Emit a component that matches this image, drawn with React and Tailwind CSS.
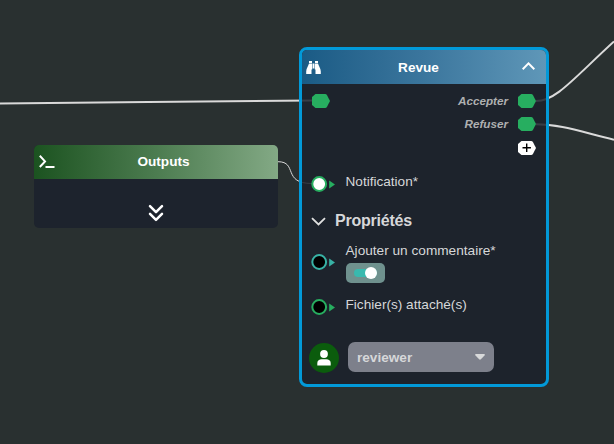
const Port = ({ plus }) => (
  <svg className="block h-[14px] w-[18px]" viewBox="0 0 18 14">
    <path d="M3.5 0H13.2Q14.3 0 14.9 1L18 7L14.9 13Q14.3 14 13.2 14H3.5L0 11V3Z" fill={plus ? '#ffffff' : '#27ae60'} />
    {plus && <path d="M8.7 2.6v8.4M4.5 6.8h8.4" stroke="#000" strokeWidth="1.4" />}
  </svg>
);

const Input = ({ color, fill }) => (
  <svg className="block h-4 w-6 shrink-0" viewBox="0 0 24 16">
    <circle cx="8.2" cy="8" r="6.9" fill={fill} stroke={color} strokeWidth="2" />
    <path d="M18.2 4.6L24 8.4L18.2 12.4Z" fill={color} />
  </svg>
);

const Wires = () => (
  <svg className="absolute inset-0" width="614" height="444" fill="none" stroke="#dadada">
    <path d="M0 103.6C110 102.8 200 100.8 312 100.6" strokeWidth="2" />
    <path d="M536 101C556 101 573 79 614 41.5" strokeWidth="2" />
    <path d="M536 124.3C560 124.3 580 131.5 614 139.7" strokeWidth="2" />
    <path d="M278 161.7C298 161.7 282 183.5 312 183.5" strokeWidth="1" />
  </svg>
);

const Output = ({ label }) => (
  <div className="flex items-start gap-[10px]">
    <span className="text-[11.7px] leading-[13px] font-bold italic text-[#aeb0b1]">{label}</span>
    <Port />
  </div>
);

const OutputsNode = () => (
  <section className="absolute left-[34px] top-[145px] h-[83px] w-[244px] overflow-hidden rounded-[5px] bg-[#1d232d]">
    <header className="flex h-[34px] items-center bg-linear-to-r from-[#1b5320] via-[#4c7c50] to-[#83a985] pl-[5px] pr-[7px]">
      <svg className="h-[14px] w-[17px]" viewBox="0 0 17 14" fill="none" stroke="#fff">
        <path d="M.8 .8L6 6.4L.8 12" strokeWidth="2" />
        <path d="M6.5 12H15.5" strokeWidth="2" />
      </svg>
      <h2 className="flex-1 text-center text-[13.6px] font-bold text-white">Outputs</h2>
    </header>
    <div className="flex h-[49px] justify-center pt-[25px]">
      <svg className="h-[18px] w-4" viewBox="0 0 16 18" fill="none" stroke="#fff" strokeWidth="2.5" strokeLinecap="round" strokeLinejoin="round">
        <path d="M2 2.2L8 8.2L14 2.2M2 9.8L8 15.8L14 9.8" />
      </svg>
    </div>
  </section>
);

const ReviewNode = () => (
  <section className="absolute left-[299px] top-[47px] h-[340px] w-[250px] rounded-lg border-3 border-[#0299d8] bg-[#1b212b]/85 bg-clip-padding text-[#d6d7d9]">
    <header className="flex h-[34px] items-center rounded-t-[5px] bg-linear-to-r from-[#1a5b85] via-[#3b769d] to-[#5f97b8] pl-[4px] pr-[11px]">
      <svg className="h-[13px] w-[15px]" viewBox="0 0 15 13" fill="#fff">
        <path d="M3 0H6V2H3ZM9 0H12V2H9ZM3 2.6H6.2V8.4H5.5V13H0.2V10.5C.3 7.5 2.1 5.5 3 2.6ZM12 2.6H8.8V8.4H9.5V13H14.8V10.5C14.7 7.5 12.9 5.5 12 2.6ZM6.7 2.6H8.3V7.4H6.7Z" />
      </svg>
      <h2 className="flex-1 pr-[6px] pt-[2px] text-center text-[13.6px] font-bold text-white">Revue</h2>
      <svg className="mb-[2px] h-2 w-[13px]" viewBox="0 0 13 8" fill="none" stroke="#fff" strokeWidth="2">
        <path d="M.7 7.2L6.5 1.4L12.3 7.2" />
      </svg>
    </header>

    <div className="flex h-[84px] items-start justify-between pl-[10px] pr-[10px] pt-[10px]">
      <Port />
      <div className="flex flex-col items-end gap-[9.4px]">
        <Output label="Accepter" />
        <Output label="Refuser" />
        <Port plus />
      </div>
    </div>

    <div className="flex pl-[9px] pt-[4px]">
      <div className="pt-[4px]"><Input color="#27ae60" fill="#ffffff" /></div>
      <span className="pl-[10.5px] text-[13.6px] leading-[20px]">Notification*</span>
    </div>

    <div className="mt-[17px] flex h-6 items-center gap-[9px] pl-[9px]">
      <svg className="h-[9px] w-[15px]" viewBox="0 0 15 9" fill="none" stroke="#e0e0e0" strokeWidth="1.8">
        <path d="M1 1.2L7.5 7.5L14 1.2" />
      </svg>
      <h3 className="text-[16px] font-bold tracking-[-0.22px]">Propriétés</h3>
    </div>

    <div className="flex pl-[9px] pt-[8px]">
      <div className="pt-[13px]"><Input color="#38b2a5" fill="#000000" /></div>
      <div className="pl-[10.5px]">
        <div className="text-[13.65px] leading-[20px]">Ajouter un commentaire*</div>
        <div className="mt-[2px] flex h-5 w-[39px] items-center rounded-[5px] bg-[#6f918e] pl-2">
          <div className="flex h-2 w-[23px] items-center justify-end rounded-full bg-[#39b9ae]">
            <div className="size-3 shrink-0 rounded-full bg-white" />
          </div>
        </div>
      </div>
    </div>

    <div className="flex pl-[9px] pt-[12px]">
      <div className="pt-[4px]"><Input color="#27ae60" fill="#000000" /></div>
      <span className="pl-[10.5px] text-[13.65px] leading-[20px]">Fichier(s) attaché(s)</span>
    </div>

    <div className="mt-[27px] flex items-start gap-[8.5px] pl-[7px]">
      <div className="mt-px flex size-[30px] items-center justify-center rounded-full bg-[#0b5c0d]">
        <svg className="h-4 w-[14px]" viewBox="0 0 14 16" fill="#fff">
          <circle cx="7" cy="4" r="3.9" />
          <path d="M.3 15.5V13C.3 10.5 2.5 9.3 4.5 9.3H9.5C11.5 9.3 13.7 10.5 13.7 13V15.5Z" />
        </svg>
      </div>
      <div className="flex h-[30px] w-[146.5px] items-center justify-between rounded-[7px] bg-[#7d808b] pl-[9.5px] pr-[9px]">
        <span className="pt-[2px] text-[13.6px] font-bold">reviewer</span>
        <svg className="h-[6px] w-[10px]" viewBox="0 0 10 6" fill="#d8d9da">
          <path d="M1 0H9Q10.5 .3 9.5 1.5L5.9 5.3Q5 6 4.1 5.3L.5 1.5Q-.5 .3 1 0Z" />
        </svg>
      </div>
    </div>
  </section>
);

export default function App() {
  return (
    <main className="relative h-[444px] w-[614px] overflow-hidden bg-[#293030] font-['Liberation_Sans',Arial,sans-serif]">
      <Wires />
      <OutputsNode />
      <ReviewNode />
    </main>
  );
}
